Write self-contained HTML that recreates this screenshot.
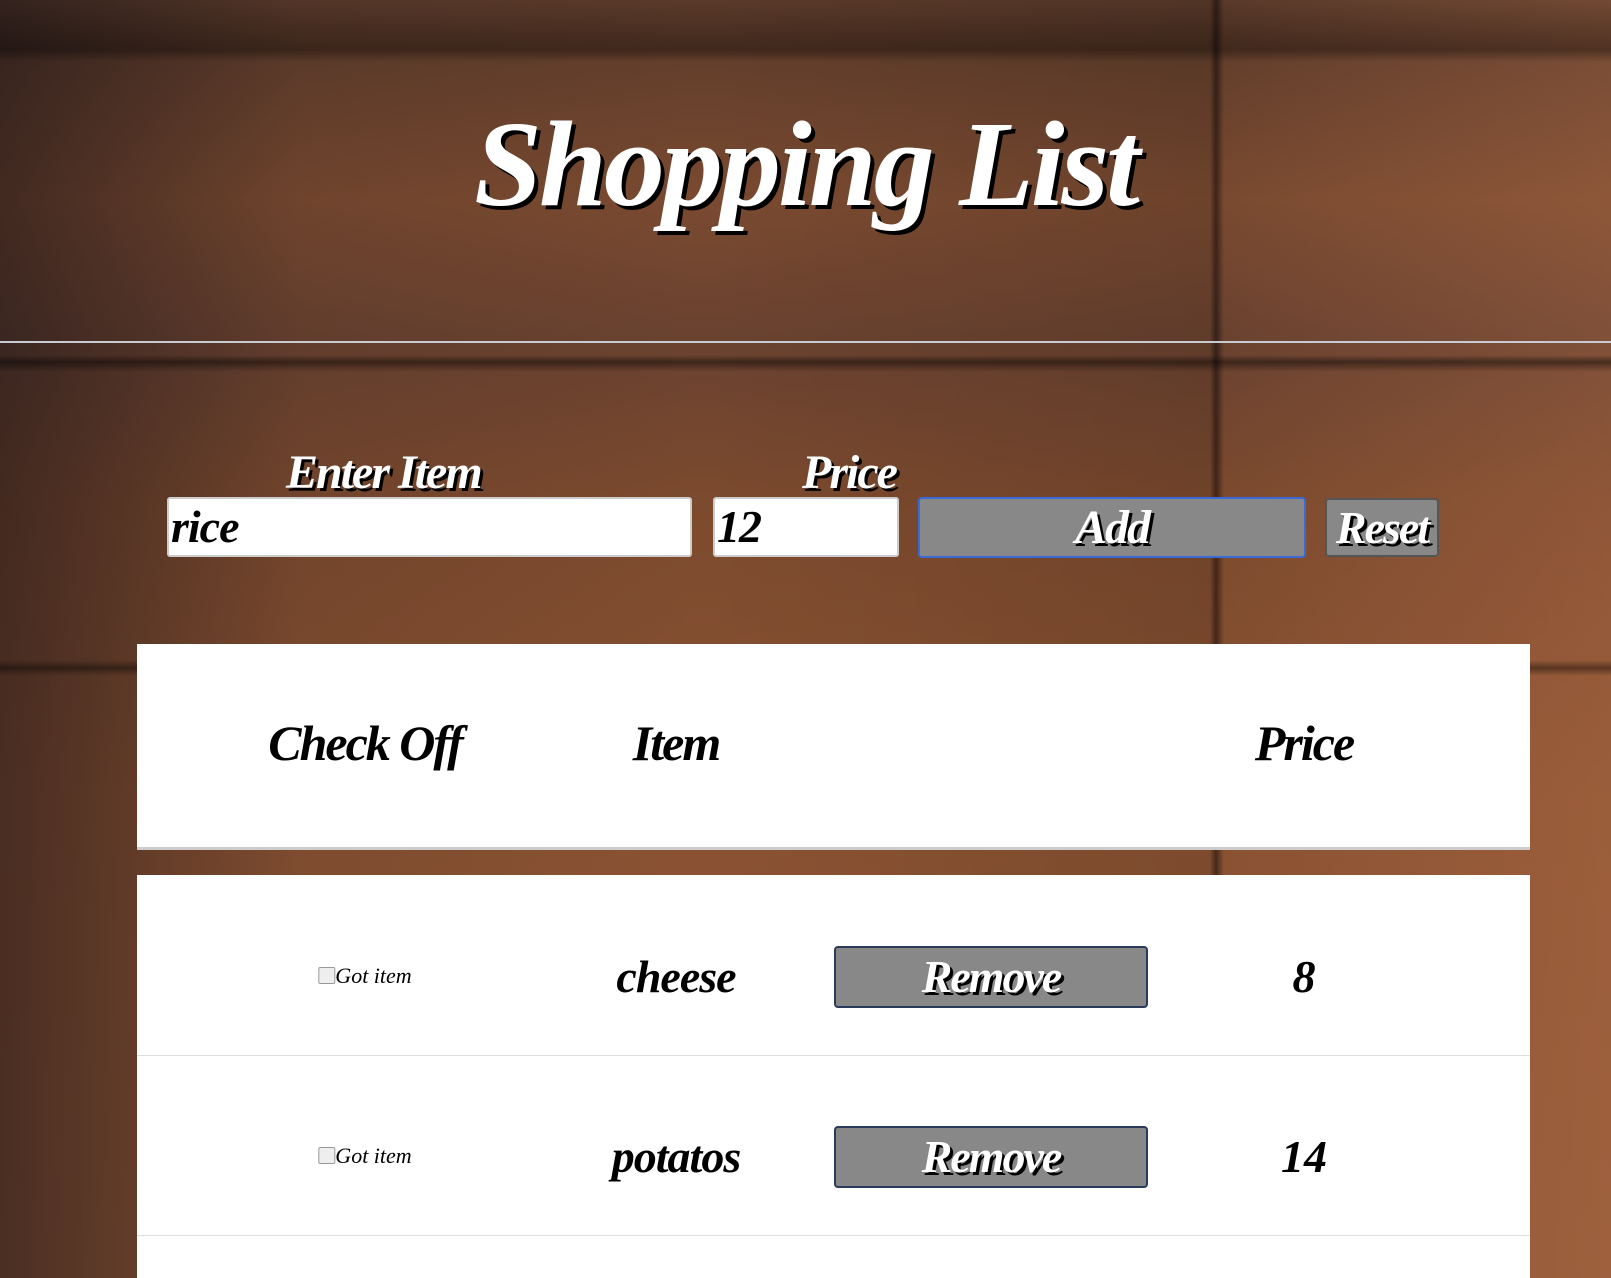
<!DOCTYPE html>
<html><head><meta charset="utf-8"><style>
html,body{margin:0;padding:0;}
body{width:1611px;height:1278px;overflow:hidden;position:relative;font-family:"Liberation Serif",serif;font-style:italic;font-weight:bold;
background:
linear-gradient(180deg,rgba(0,0,0,0) 0,rgba(0,0,0,.35) 50px,rgba(0,0,0,0) 62px,rgba(0,0,0,0) 355px,rgba(0,0,0,.45) 362px,rgba(0,0,0,0) 372px,rgba(0,0,0,0) 660px,rgba(0,0,0,.4) 668px,rgba(0,0,0,0) 676px),
linear-gradient(90deg,rgba(20,15,20,.55) 0,rgba(20,15,20,.1) 300px,rgba(0,0,0,0) 700px,rgba(0,0,0,.1) 1210px,rgba(0,0,0,.5) 1216px,rgba(0,0,0,0) 1224px,rgba(255,160,110,.15) 1611px),
linear-gradient(180deg,#5a3a2a 0,#7a4a30 200px,#6a4230 340px,#7c4a2e 500px,#8a5232 800px,#8d5535 1278px);}
.hr{position:absolute;left:0;top:341px;width:1611px;height:2px;background:#c8ccd2;}
h1{position:absolute;left:0;width:1611px;top:95px;margin:0;text-align:center;font-size:122px;color:#fff;text-shadow:4px 4px 0 #000;font-weight:bold;letter-spacing:-3px;}
.lbl{position:absolute;top:445px;font-size:48px;color:#fff;text-shadow:3px 3px 0 #000;letter-spacing:-2px;}
.inp{position:absolute;top:497px;height:60px;background:#fff;border:2px solid #ccc;border-radius:3px;box-sizing:border-box;font-size:46px;line-height:56px;color:#000;letter-spacing:-1px;padding-left:2px;}
.btn{position:absolute;background:#888;box-sizing:border-box;border:2px solid #3a5a8a;border-radius:4px;color:#fff;text-align:center;text-shadow:3px 3px 0 #000;letter-spacing:-2px;}
.tbl{position:absolute;left:137px;width:1393px;background:#fff;}
.c{position:absolute;text-align:center;transform:translateX(-50%);white-space:nowrap;}
</style></head><body>
<h1>Shopping List</h1>
<div class="hr"></div>
<div class="lbl" style="left:286px">Enter Item</div>
<div class="lbl" style="left:802px">Price</div>
<div class="inp" style="left:167px;width:525px">rice</div>
<div class="inp" style="left:713px;width:186px">12</div>
<div class="btn" style="left:918px;top:497px;width:388px;height:61px;font-size:48px;line-height:57px;border-color:#3a6ad8">Add</div>
<div class="btn" style="left:1325px;top:498px;width:114px;height:59px;font-size:46px;line-height:55px;border-color:#555">Reset</div>
<div class="tbl" style="top:644px;height:206px;border-bottom:3px solid #ccc;box-sizing:border-box">
 <div class="c" style="left:228px;top:70px;font-size:50px;letter-spacing:-2px">Check Off</div>
 <div class="c" style="left:539px;top:70px;font-size:50px;letter-spacing:-2px">Item</div>
 <div class="c" style="left:1167px;top:70px;font-size:50px;letter-spacing:-2px">Price</div>
</div>
<div class="tbl" style="top:875px;height:403px">
 <div style="position:absolute;left:0;right:0;top:180px;height:1px;background:#ddd"></div>
 <div style="position:absolute;left:0;right:0;top:360px;height:1px;background:#ddd"></div>
 <div class="c" style="left:228px;top:88px;font-size:22px;font-weight:normal"><span style="display:inline-block;width:15px;height:15px;border:1px solid #999;border-radius:2px;background:#eee;vertical-align:-1px"></span>Got item</div>
 <div class="c" style="left:539px;top:75px;font-size:46px;letter-spacing:-1px">cheese</div>
 <div class="btn" style="left:697px;top:71px;width:314px;height:62px;font-size:46px;line-height:58px;border-color:#2a3a5a">Remove</div>
 <div class="c" style="left:1167px;top:75px;font-size:46px">8</div>
 <div class="c" style="left:228px;top:268px;font-size:22px;font-weight:normal"><span style="display:inline-block;width:15px;height:15px;border:1px solid #999;border-radius:2px;background:#eee;vertical-align:-1px"></span>Got item</div>
 <div class="c" style="left:539px;top:255px;font-size:46px;letter-spacing:-1px">potatos</div>
 <div class="btn" style="left:697px;top:251px;width:314px;height:62px;font-size:46px;line-height:58px;border-color:#2a3a5a">Remove</div>
 <div class="c" style="left:1167px;top:255px;font-size:46px">14</div>
</div>
</body></html>
